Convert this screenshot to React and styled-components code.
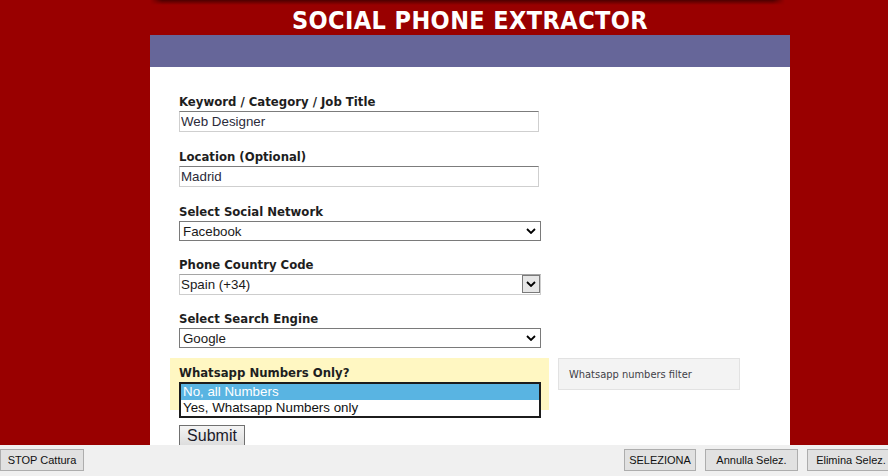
import React from 'react';
import styled, { createGlobalStyle } from 'styled-components';

const Global = createGlobalStyle`
  html, body { margin: 0; padding: 0; }
  body {
    background: #990000;
    font-family: "Liberation Sans", Arial, sans-serif;
    overflow: hidden;
  }
`;

const Page = styled.div`
  height: 476px;
  display: flex;
  flex-direction: column;
`;

const Main = styled.main`
  flex: 1;
  min-height: 0;
  overflow: hidden;
`;

const Container = styled.div`
  width: 640px;
  margin-left: 150px;
`;

const TopShadow = styled.div`
  width: 635px;
  height: 5px;
  background: linear-gradient(#4e0000, #990000);
  -webkit-mask-image: linear-gradient(to right, transparent, #000 12px, #000 calc(100% - 12px), transparent);
  mask-image: linear-gradient(to right, transparent, #000 12px, #000 calc(100% - 12px), transparent);
`;

const Title = styled.h1`
  margin: 0;
  height: 30px;
  padding-top: 2px;
  box-sizing: border-box;
  font: bold 25px "DejaVu Sans Condensed", "DejaVu Sans", sans-serif;
  font-stretch: condensed;
  letter-spacing: 0.4px;
  line-height: 28px;
  text-align: center;
  color: #fff;
`;

const Band = styled.div`
  height: 32px;
  background: #666699;
`;

const Panel = styled.form`
  background: #fff;
  min-height: 420px;
  padding: 26px 0 0 29px;
  box-sizing: border-box;
`;

const Field = styled.div`
  margin-bottom: ${p => p.$gap ?? 16}px;
`;

const Label = styled.label`
  display: block;
  font: bold 13px "DejaVu Sans Condensed", "DejaVu Sans", sans-serif;
  font-stretch: condensed;
  line-height: 17px;
  height: 16px;
  margin-bottom: 2px;
  color: #1e1e1e;
`;

const TextInput = styled.input`
  display: block;
  width: 360px;
  height: 21px;
  box-sizing: border-box;
  border: 1px solid #cfcfcf;
  border-top-color: #7c7c7c;
  padding: 0 1px;
  margin: 0;
  font: 13.33px "Liberation Sans", Arial, sans-serif;
  color: #2b2b3a;
  outline: none;
`;

const SelectWrap = styled.div`
  position: relative;
  width: 362px;
  height: ${p => (p.$classic ? 21 : 20)}px;
`;

const Select = styled.select`
  appearance: none;
  -webkit-appearance: none;
  display: block;
  width: 100%;
  height: 100%;
  box-sizing: border-box;
  margin: 0;
  border: 1px solid ${p => (p.$classic ? '#cdcdcd' : '#7a7a7a')};
  border-top-color: ${p => (p.$classic ? '#a5a5a5' : '#7a7a7a')};
  border-radius: 0;
  background: #fff;
  padding: 0 0 0 ${p => (p.$classic ? 1 : 3)}px;
  font: 13.33px "Liberation Sans", Arial, sans-serif;
  color: #1a1a1a;
  outline: none;
`;

const Arrow = styled.span`
  position: absolute;
  top: ${p => (p.$classic ? 1 : 0)}px;
  bottom: ${p => (p.$classic ? 2 : 0)}px;
  right: ${p => (p.$classic ? 1 : 4)}px;
  width: ${p => (p.$classic ? 18 : 12)}px;
  display: flex;
  align-items: center;
  justify-content: center;
  box-sizing: border-box;
  pointer-events: none;
  background: ${p => (p.$classic ? '#e6e6e6' : 'transparent')};
  border: ${p => (p.$classic ? '1px solid #7a7a7a' : 'none')};
`;

const Chevron = () => (
  <svg width="10" height="6" viewBox="0 0 10 6">
    <path d="M1 1 L5 5 L9 1" stroke="#000" strokeWidth="1.8" fill="none" />
  </svg>
);

const FilterRow = styled.div`
  display: flex;
  align-items: flex-start;
  gap: 9px;
  margin-left: -9px;
`;

const Highlight = styled.div`
  width: 379px;
  height: 52px;
  box-sizing: border-box;
  background: #fff7c2;
  padding: 6px 0 0 9px;
`;

const ListBox = styled.div`
  width: 362px;
  box-sizing: border-box;
  border: 2px solid #1c1c1c;
  background: #fff;
`;

const ListOption = styled.div`
  height: 16px;
  padding-left: 2px;
  font: 13.33px "Liberation Sans", Arial, sans-serif;
  line-height: 16px;
  background: ${p => (p.$selected ? '#59b4e2' : '#fff')};
  color: ${p => (p.$selected ? '#fff' : '#111')};
`;

const Note = styled.div`
  width: 182px;
  height: 32px;
  box-sizing: border-box;
  background: #f3f3f3;
  border: 1px solid #e2e2e2;
  padding-left: 10px;
  font: 11px "DejaVu Sans Condensed", "DejaVu Sans", sans-serif;
  font-stretch: condensed;
  line-height: 32px;
  color: #3f3f48;
`;

const Submit = styled.button`
  display: block;
  margin-top: 15px;
  width: 66px;
  height: 22px;
  padding: 0;
  border: 1px solid #707070;
  border-radius: 0;
  background: linear-gradient(#f4f4f4, #dcdcdc);
  font: 16px "Liberation Sans", Arial, sans-serif;
  color: #1b1b2a;
`;

const Bar = styled.div`
  height: 31px;
  flex-shrink: 0;
  background: #f0f0f0;
  display: flex;
  align-items: flex-start;
  padding-top: 4px;
  box-sizing: border-box;
  overflow: hidden;
`;

const BarGroup = styled.div`
  display: flex;
  gap: 9px;
  margin-left: auto;
  margin-right: -7px;
`;

const WinButton = styled.button`
  flex-shrink: 0;
  width: ${p => p.$w}px;
  height: 22px;
  padding: 0;
  border: 1px solid #adadad;
  border-radius: 0;
  background: #e1e1e1;
  font: 11px "Liberation Sans", Arial, sans-serif;
  color: #111;
  white-space: nowrap;
`;

const SelectField = ({ label, value, classic, gap }) => (
  <Field $gap={gap}>
    <Label>{label}</Label>
    <SelectWrap $classic={classic}>
      <Select $classic={classic} defaultValue={value}>
        <option>{value}</option>
      </Select>
      <Arrow $classic={classic}>
        <Chevron />
      </Arrow>
    </SelectWrap>
  </Field>
);

export default function App() {
  return (
    <Page>
      <Global />
      <Main>
        <Container>
          <TopShadow />
          <Title>SOCIAL PHONE EXTRACTOR</Title>
          <Band />
          <Panel onSubmit={e => e.preventDefault()}>
            <Field>
              <Label>Keyword / Category / Job Title</Label>
              <TextInput defaultValue="Web Designer" />
            </Field>
            <Field>
              <Label>Location (Optional)</Label>
              <TextInput defaultValue="Madrid" />
            </Field>
            <SelectField label="Select Social Network" value="Facebook" gap={15} />
            <SelectField label="Phone Country Code" value="Spain (+34)" classic gap={15} />
            <SelectField label="Select Search Engine" value="Google" gap={10} />
            <FilterRow>
              <Highlight>
                <Label>Whatsapp Numbers Only?</Label>
                <ListBox>
                  <ListOption $selected>No, all Numbers</ListOption>
                  <ListOption>Yes, Whatsapp Numbers only</ListOption>
                </ListBox>
              </Highlight>
              <Note>Whatsapp numbers filter</Note>
            </FilterRow>
            <Submit type="submit">Submit</Submit>
          </Panel>
        </Container>
      </Main>
      <Bar>
        <WinButton $w={84}>STOP Cattura</WinButton>
        <BarGroup>
          <WinButton $w={72}>SELEZIONA</WinButton>
          <WinButton $w={93}>Annulla Selez.</WinButton>
          <WinButton $w={88}>Elimina Selez.</WinButton>
        </BarGroup>
      </Bar>
    </Page>
  );
}
